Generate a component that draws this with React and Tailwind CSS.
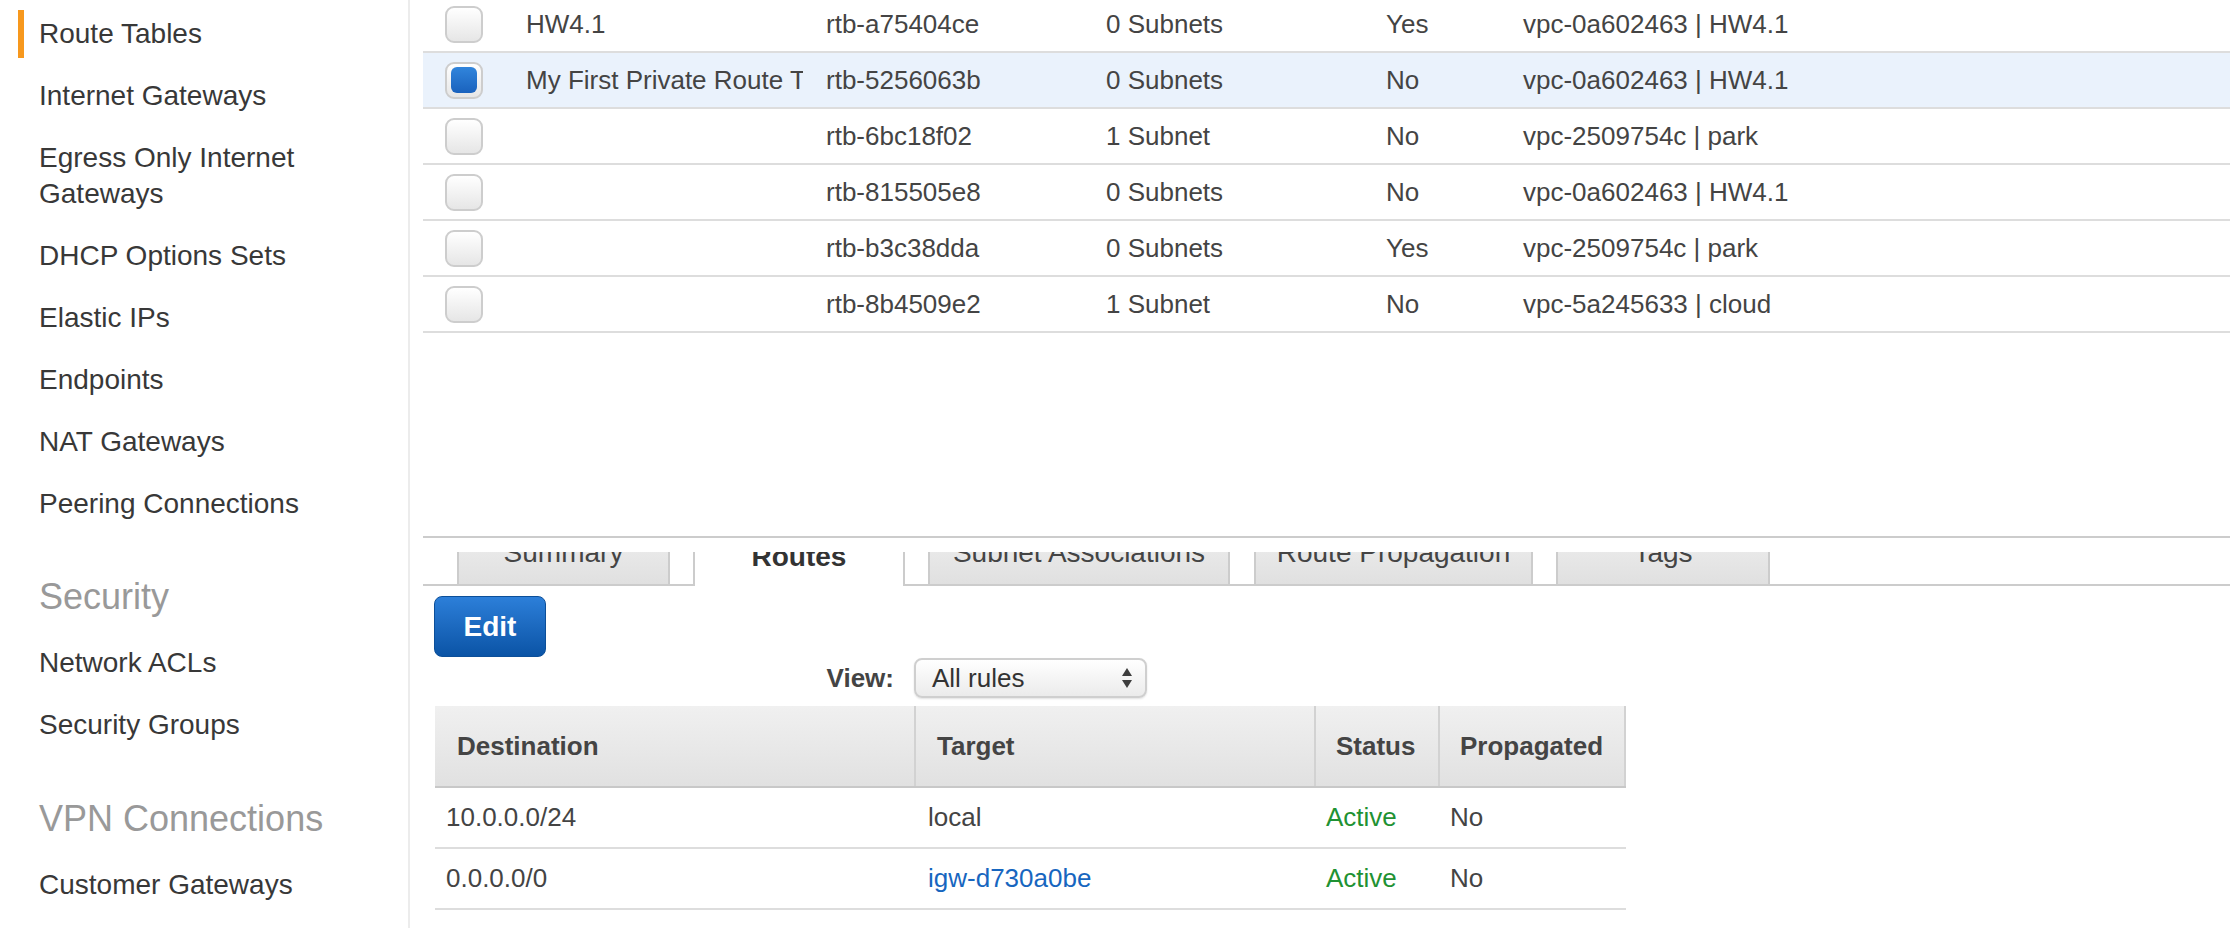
import React from 'react'

const NAV_TOP = [
  'Route Tables',
  'Internet Gateways',
  'Egress Only Internet Gateways',
  'DHCP Options Sets',
  'Elastic IPs',
  'Endpoints',
  'NAT Gateways',
  'Peering Connections',
]

const ROUTE_TABLES = [
  { name: 'HW4.1', id: 'rtb-a75404ce', subnets: '0 Subnets', main: 'Yes', vpc: 'vpc-0a602463 | HW4.1' },
  { name: 'My First Private Route Table', id: 'rtb-5256063b', subnets: '0 Subnets', main: 'No', vpc: 'vpc-0a602463 | HW4.1', selected: true },
  { name: '', id: 'rtb-6bc18f02', subnets: '1 Subnet', main: 'No', vpc: 'vpc-2509754c | park' },
  { name: '', id: 'rtb-815505e8', subnets: '0 Subnets', main: 'No', vpc: 'vpc-0a602463 | HW4.1' },
  { name: '', id: 'rtb-b3c38dda', subnets: '0 Subnets', main: 'Yes', vpc: 'vpc-2509754c | park' },
  { name: '', id: 'rtb-8b4509e2', subnets: '1 Subnet', main: 'No', vpc: 'vpc-5a245633 | cloud' },
]

const ROUTES = [
  { dest: '10.0.0.0/24', target: 'local', link: false },
  { dest: '0.0.0.0/0', target: 'igw-d730a0be', link: true },
]

function NavItem({ label, active }) {
  return (
    <div className="relative py-[13px] leading-[36px] text-[28px] text-[#383838]">
      {active && <div className="absolute left-[-21px] top-[7px] w-[6px] h-[48px] bg-[#f7981d]" />}
      {label}
    </div>
  )
}

function Checkbox({ checked }) {
  return (
    <div className="w-[38px] h-[37px] rounded-[9px] border-2 border-[#cdcdcd] bg-gradient-to-b from-white to-[#e6e6e6] flex items-center justify-center">
      {checked && <div className="w-[26px] h-[26px] rounded-[6px] bg-gradient-to-b from-[#3185dc] to-[#1a62bd]" />}
    </div>
  )
}

function Tab({ label, active, width }) {
  if (active) {
    return (
      <div className={`${width} h-[70px] shrink-0 bg-white border-l-2 border-r-2 border-[#cccccc] flex items-end justify-center pb-[13px] leading-[32px] text-[28px] font-bold text-[#333]`}>
        {label}
      </div>
    )
  }
  return (
    <div className={`${width} h-[70px] shrink-0 bg-gradient-to-b from-[#f2f2f2] to-[#e0e0e0] border-2 border-t-0 border-[#cccccc] flex items-end justify-center pb-[15px] leading-[32px] text-[28px] text-[#444]`}>
      {label}
    </div>
  )
}

function Spacer({ width }) {
  return <div className={`${width} h-[70px] shrink-0 border-b-2 border-[#cccccc]`} />
}

export default function App() {
  return (
    <div className="flex w-[2230px] h-[928px] overflow-hidden bg-white font-['Liberation_Sans',Arial,sans-serif]">
      {/* Sidebar */}
      <aside className="w-[410px] shrink-0 border-r-2 border-[#ececec] pl-[39px] pr-[69px] pt-[3px]">
        {NAV_TOP.map((label, i) => (
          <NavItem key={label} label={label} active={i === 0} />
        ))}
        <div className="mt-[40px] mb-[13px] leading-[44px] text-[36px] text-[#999]">Security</div>
        <NavItem label="Network ACLs" />
        <NavItem label="Security Groups" />
        <div className="mt-[41px] mb-[13px] leading-[44px] text-[36px] text-[#999]">VPN Connections</div>
        <NavItem label="Customer Gateways" />
      </aside>

      {/* Main */}
      <main className="flex-1 flex flex-col min-w-0">
        {/* Route tables list */}
        <div className="h-[536px] overflow-hidden pl-[13px]">
          <div className="mt-[-3px]">
            {ROUTE_TABLES.map((r) => (
              <div
                key={r.id}
                className={`flex items-center h-[56px] border-b-2 border-[#dddddd] text-[26px] text-[#444] whitespace-nowrap ${r.selected ? 'bg-[#eaf2fc]' : ''}`}
              >
                <div className="w-[103px] shrink-0 pl-[22px]">
                  <Checkbox checked={r.selected} />
                </div>
                <div className="w-[300px] shrink-0">
                  <div className="w-[277px] overflow-hidden">{r.name}</div>
                </div>
                <div className="w-[280px] shrink-0">{r.id}</div>
                <div className="w-[280px] shrink-0">{r.subnets}</div>
                <div className="w-[137px] shrink-0">{r.main}</div>
                <div className="flex-1">{r.vpc}</div>
              </div>
            ))}
          </div>
        </div>

        {/* Splitter */}
        <div className="ml-[13px] h-[2px] bg-[#cccccc]" />

        {/* Detail tabs */}
        <div className="mt-[14px] h-[34px] overflow-hidden flex items-end pl-[13px]">
          <Spacer width="w-[34px]" />
          <Tab label="Summary" width="w-[213px]" />
          <Spacer width="w-[23px]" />
          <Tab label="Routes" width="w-[212px]" active />
          <Spacer width="w-[23px]" />
          <Tab label="Subnet Associations" width="w-[302px]" />
          <Spacer width="w-[24px]" />
          <Tab label="Route Propagation" width="w-[279px]" />
          <Spacer width="w-[23px]" />
          <Tab label="Tags" width="w-[214px]" />
          <Spacer width="flex-1" />
        </div>

        {/* Edit */}
        <div className="pl-[24px] mt-[10px]">
          <button className="w-[112px] h-[61px] rounded-[8px] border border-[#0c4f99] bg-gradient-to-b from-[#2c7fd9] to-[#0a54a6] text-white text-[28px] font-bold">
            Edit
          </button>
        </div>

        {/* View filter */}
        <div className="w-[737px] mt-[1px] flex items-center justify-end gap-[20px]">
          <span className="text-[26px] font-bold text-[#444]">View:</span>
          <div className="w-[233px] h-[40px] rounded-[8px] border-2 border-[#cfcfcf] bg-gradient-to-b from-white to-[#ebebeb] shadow-[0_1px_2px_rgba(0,0,0,0.12)] flex items-center justify-between pl-[16px] pr-[12px] text-[26px] text-[#333]">
            <span>All rules</span>
            <svg width="12" height="22" viewBox="0 0 12 22">
              <path d="M6 1 L11 9 L1 9 Z" fill="#3d3d3d" />
              <path d="M1 13 L11 13 L6 21 Z" fill="#3d3d3d" />
            </svg>
          </div>
        </div>

        {/* Routes table */}
        <div className="ml-[25px] mt-[8px] w-[1191px] text-[26px]">
          <div className="flex h-[82px] bg-gradient-to-b from-[#f0f0f0] to-[#e1e1e1] border-b-2 border-[#c8c8c8] font-bold text-[#444]">
            <div className="w-[479px] flex items-center pl-[22px]">Destination</div>
            <div className="w-[400px] flex items-center pl-[21px] border-l-2 border-[#d2d2d2]">Target</div>
            <div className="w-[124px] flex items-center pl-[20px] border-l-2 border-[#d2d2d2]">Status</div>
            <div className="flex-1 flex items-center pl-[20px] border-l-2 border-r-2 border-[#d2d2d2]">Propagated</div>
          </div>
          {ROUTES.map((r) => (
            <div key={r.dest} className="flex h-[61px] items-center border-b-2 border-[#dddddd] text-[#444]">
              <div className="w-[479px] pl-[11px]">{r.dest}</div>
              <div className={`w-[400px] pl-[14px] ${r.link ? 'text-[#1766bf]' : ''}`}>{r.target}</div>
              <div className="w-[124px] pl-[12px] text-[#1f9233]">Active</div>
              <div className="flex-1 pl-[12px]">No</div>
            </div>
          ))}
        </div>
      </main>
    </div>
  )
}
